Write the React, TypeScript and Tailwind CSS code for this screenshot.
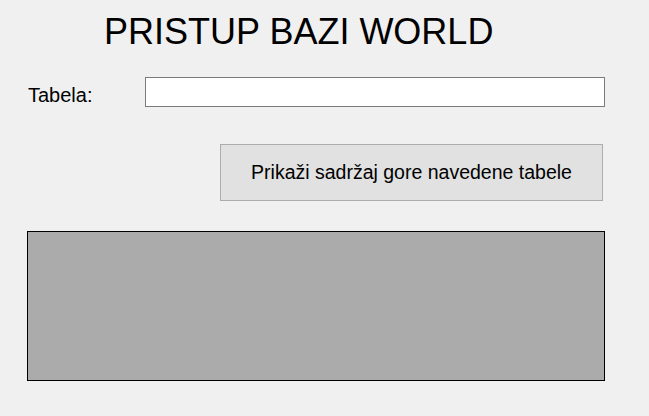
function App() {
  return (
    <div className="w-[649px] h-[416px] bg-[#f0f0f0] font-['Liberation_Sans',Arial,sans-serif] text-black pt-[14px] overflow-hidden">
      <h1 className="ml-[104px] text-[36px] leading-[35px] font-normal">PRISTUP BAZI WORLD</h1>

      <div className="flex items-start mt-[28px]">
        <label className="ml-[28px] mt-[8px] w-[117px] text-[20px] leading-[20px]">Tabela:</label>
        <input type="text" className="w-[460px] h-[30px] bg-white border border-[#7a7a7a] outline-none px-1" />
      </div>

      <button className="ml-[220px] mt-[37px] w-[383px] h-[57px] bg-[#e1e1e1] border border-[#adadad] text-[19.5px] leading-[19px] flex items-center justify-center">
        Prikaži sadržaj gore navedene tabele
      </button>

      <div className="ml-[27px] mt-[30px] w-[578px] h-[150px] bg-[#ababab] border border-black"></div>
    </div>
  );
}

export default App;
